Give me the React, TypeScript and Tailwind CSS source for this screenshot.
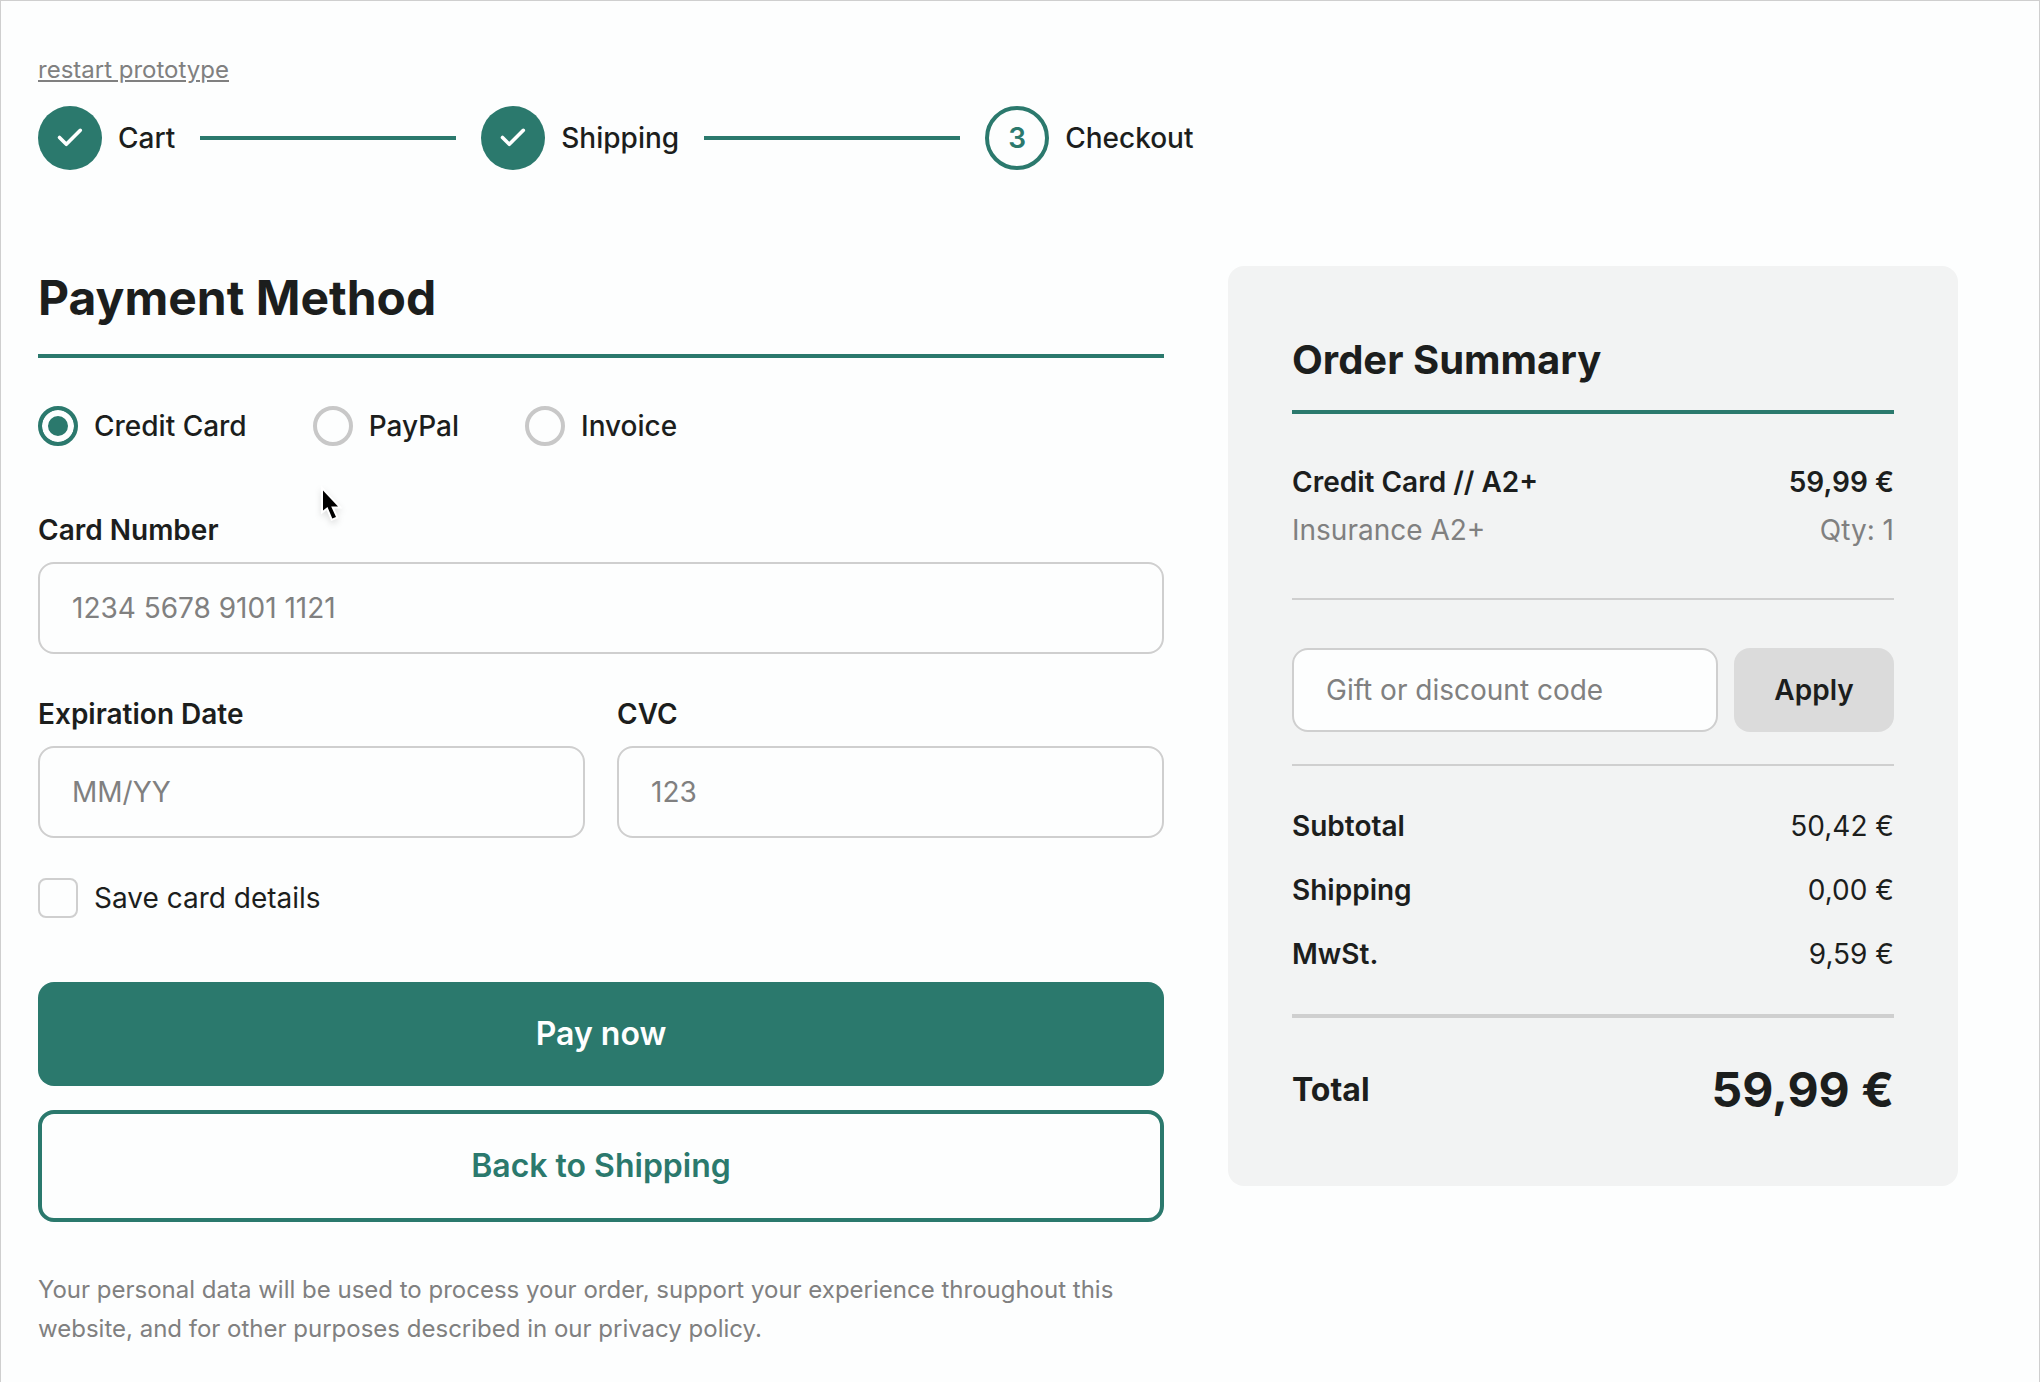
import { useState } from 'react'

type Step = {
    label: string
    done: boolean
}

const STEPS: Step[] = [
    { label: 'Cart', done: true },
    { label: 'Shipping', done: true },
    { label: 'Checkout', done: false },
]

const METHODS = ['Credit Card', 'PayPal', 'Invoice']

const COSTS = [
    { label: 'Subtotal', value: '50,42 €' },
    { label: 'Shipping', value: '0,00 €' },
    { label: 'MwSt.', value: '9,59 €' },
]

function CheckIcon() {
    return (
        <svg width="64" height="64" viewBox="0 0 64 64" fill="none" aria-hidden="true">
            <path d="M21.500 31.500L28.300 38.300L42.300 24.300" stroke="#fff" strokeWidth="3.6" strokeLinecap="round" strokeLinejoin="round" />
        </svg>
    )
}

function Stepper() {
    return (
        <ol className="flex items-center gap-[25px] text-[28px] leading-10 font-medium">
            {STEPS.map((step, i) => (
                <li key={step.label} className="flex items-center gap-[25px]">
                    {i > 0 && <span className="h-1 w-64 bg-[#2b796d]" />}
                    <span className="flex items-center gap-4">
                        {step.done ? (
                            <span className="size-16 shrink-0 rounded-full bg-[#2b796d]">
                                <CheckIcon />
                            </span>
                        ) : (
                            <span className="flex size-16 shrink-0 items-center justify-center rounded-full border-4 border-[#2b796d] font-semibold text-[#2b796d]">
                                {i + 1}
                            </span>
                        )}
                        {step.label}
                    </span>
                </li>
            ))}
        </ol>
    )
}

type FieldProps = {
    id: string
    label: string
    placeholder: string
}

function Field({ id, label, placeholder }: FieldProps) {
    return (
        <div className="min-w-0 flex-1">
            <label htmlFor={id} className="mb-3 block leading-10 font-semibold">{label}</label>
            <input
                id={id}
                type="text"
                placeholder={placeholder}
                className="block h-23 w-full rounded-2xl border-2 border-[#cfcfcf] bg-[#fdfefe] px-8 placeholder:text-[#808080]"
            />
        </div>
    )
}

function PaymentForm() {
    const [method, setMethod] = useState('Credit Card')

    return (
        <form onSubmit={e => e.preventDefault()}>
            <h1 className="border-b-4 border-[#2b796d] pb-6 text-5xl leading-16 font-bold">Payment Method</h1>

            <div className="mt-12 flex gap-[66px]">
                {METHODS.map(name => (
                    <label key={name} className="flex items-center gap-4 leading-10 font-medium">
                        <input
                            type="radio"
                            name="method"
                            checked={method === name}
                            onChange={() => setMethod(name)}
                            className="size-10 appearance-none rounded-full border-4 border-[#c8c8c8] checked:border-[#2b796d] checked:bg-[#2b796d] checked:shadow-[inset_0_0_0_6px_#fdfefe]"
                        />
                        {name}
                    </label>
                ))}
            </div>

            <div className="mt-16 flex flex-col gap-10">
                <Field id="card-number" label="Card Number" placeholder="1234 5678 9101 1121" />
                <div className="flex gap-8">
                    <Field id="expiration" label="Expiration Date" placeholder="MM/YY" />
                    <Field id="cvc" label="CVC" placeholder="123" />
                </div>
                <label className="flex items-center gap-4 leading-10">
                    <input type="checkbox" className="size-10 appearance-none rounded-lg border-2 border-[#cfcfcf] checked:bg-[#2b796d]" />
                    Save card details
                </label>
            </div>

            <div className="mt-16 flex flex-col gap-6 text-[32px] leading-10 font-semibold">
                <button type="submit" className="rounded-2xl bg-[#2b796d] py-8 text-white">Pay now</button>
                <button type="button" className="rounded-2xl border-4 border-[#2b796d] py-8 text-[#2b796d]">Back to Shipping</button>
            </div>

            <p className="mt-12 text-2xl leading-[39px] text-[#808080]">
                Your personal data will be used to process your order, support your experience throughout this
                website, and for other purposes described in our privacy policy.
            </p>
        </form>
    )
}

function OrderSummary() {
    return (
        <aside className="rounded-2xl bg-[#f2f3f3] p-16">
            <h2 className="border-b-4 border-[#2b796d] pb-5 text-[40px] leading-[60px] font-bold">Order Summary</h2>

            <div className="border-b-2 border-[#cfcfcf] py-11 leading-12">
                <div className="flex justify-between font-semibold">
                    <span>Credit Card // A2+</span>
                    <span>59,99 €</span>
                </div>
                <div className="flex justify-between text-[#808080]">
                    <span>Insurance A2+</span>
                    <span>Qty: 1</span>
                </div>
            </div>

            <div className="flex gap-4 border-b-2 border-[#cfcfcf] pt-12 pb-8">
                <input
                    type="text"
                    aria-label="Gift or discount code"
                    placeholder="Gift or discount code"
                    className="h-21 min-w-0 flex-1 rounded-2xl border-2 border-[#cfcfcf] bg-[#fdfefe] px-8 placeholder:text-[#808080]"
                />
                <button type="button" className="w-40 rounded-2xl bg-[#dbdbdb] font-semibold">Apply</button>
            </div>

            <dl className="flex flex-col gap-6 border-b-4 border-[#cfcfcf] py-10 leading-10">
                {COSTS.map(cost => (
                    <div key={cost.label} className="flex justify-between">
                        <dt className="font-semibold">{cost.label}</dt>
                        <dd>{cost.value}</dd>
                    </div>
                ))}
            </dl>

            <div className="mt-10 flex items-center justify-between leading-16 font-bold">
                <span className="text-[32px]">Total</span>
                <span className="text-5xl leading-16">59,99 €</span>
            </div>
        </aside>
    )
}

function Pointer() {
    return (
        <svg className="absolute top-[475px] left-[309px] drop-shadow-md" width="40" height="52" viewBox="0 0 40 52" aria-hidden="true">
            <path
                d="M13 14.500V34.500L17.500 31L22.300 42.500L26 41L21.200 30.500H28Z"
                fill="#000"
                stroke="#fff"
                strokeWidth="4"
                paintOrder="stroke"
            />
        </svg>
    )
}

export default function App() {
    return (
        <div className="relative min-h-screen border border-[#cfcfcf] bg-[#fdfefe] pt-[51px] pr-[81px] pb-10 pl-[37px] font-[Inter,sans-serif] text-[28px] text-[#1c1e1d]">
            <a href="#" className="block w-fit text-2xl leading-9 text-[#808080] underline">restart prototype</a>
            <div className="mt-[18px]">
                <Stepper />
            </div>
            <main className="mt-24 grid grid-cols-[minmax(0,1126fr)_minmax(0,730fr)] items-start gap-16">
                <PaymentForm />
                <OrderSummary />
            </main>
            <Pointer />
        </div>
    )
}
